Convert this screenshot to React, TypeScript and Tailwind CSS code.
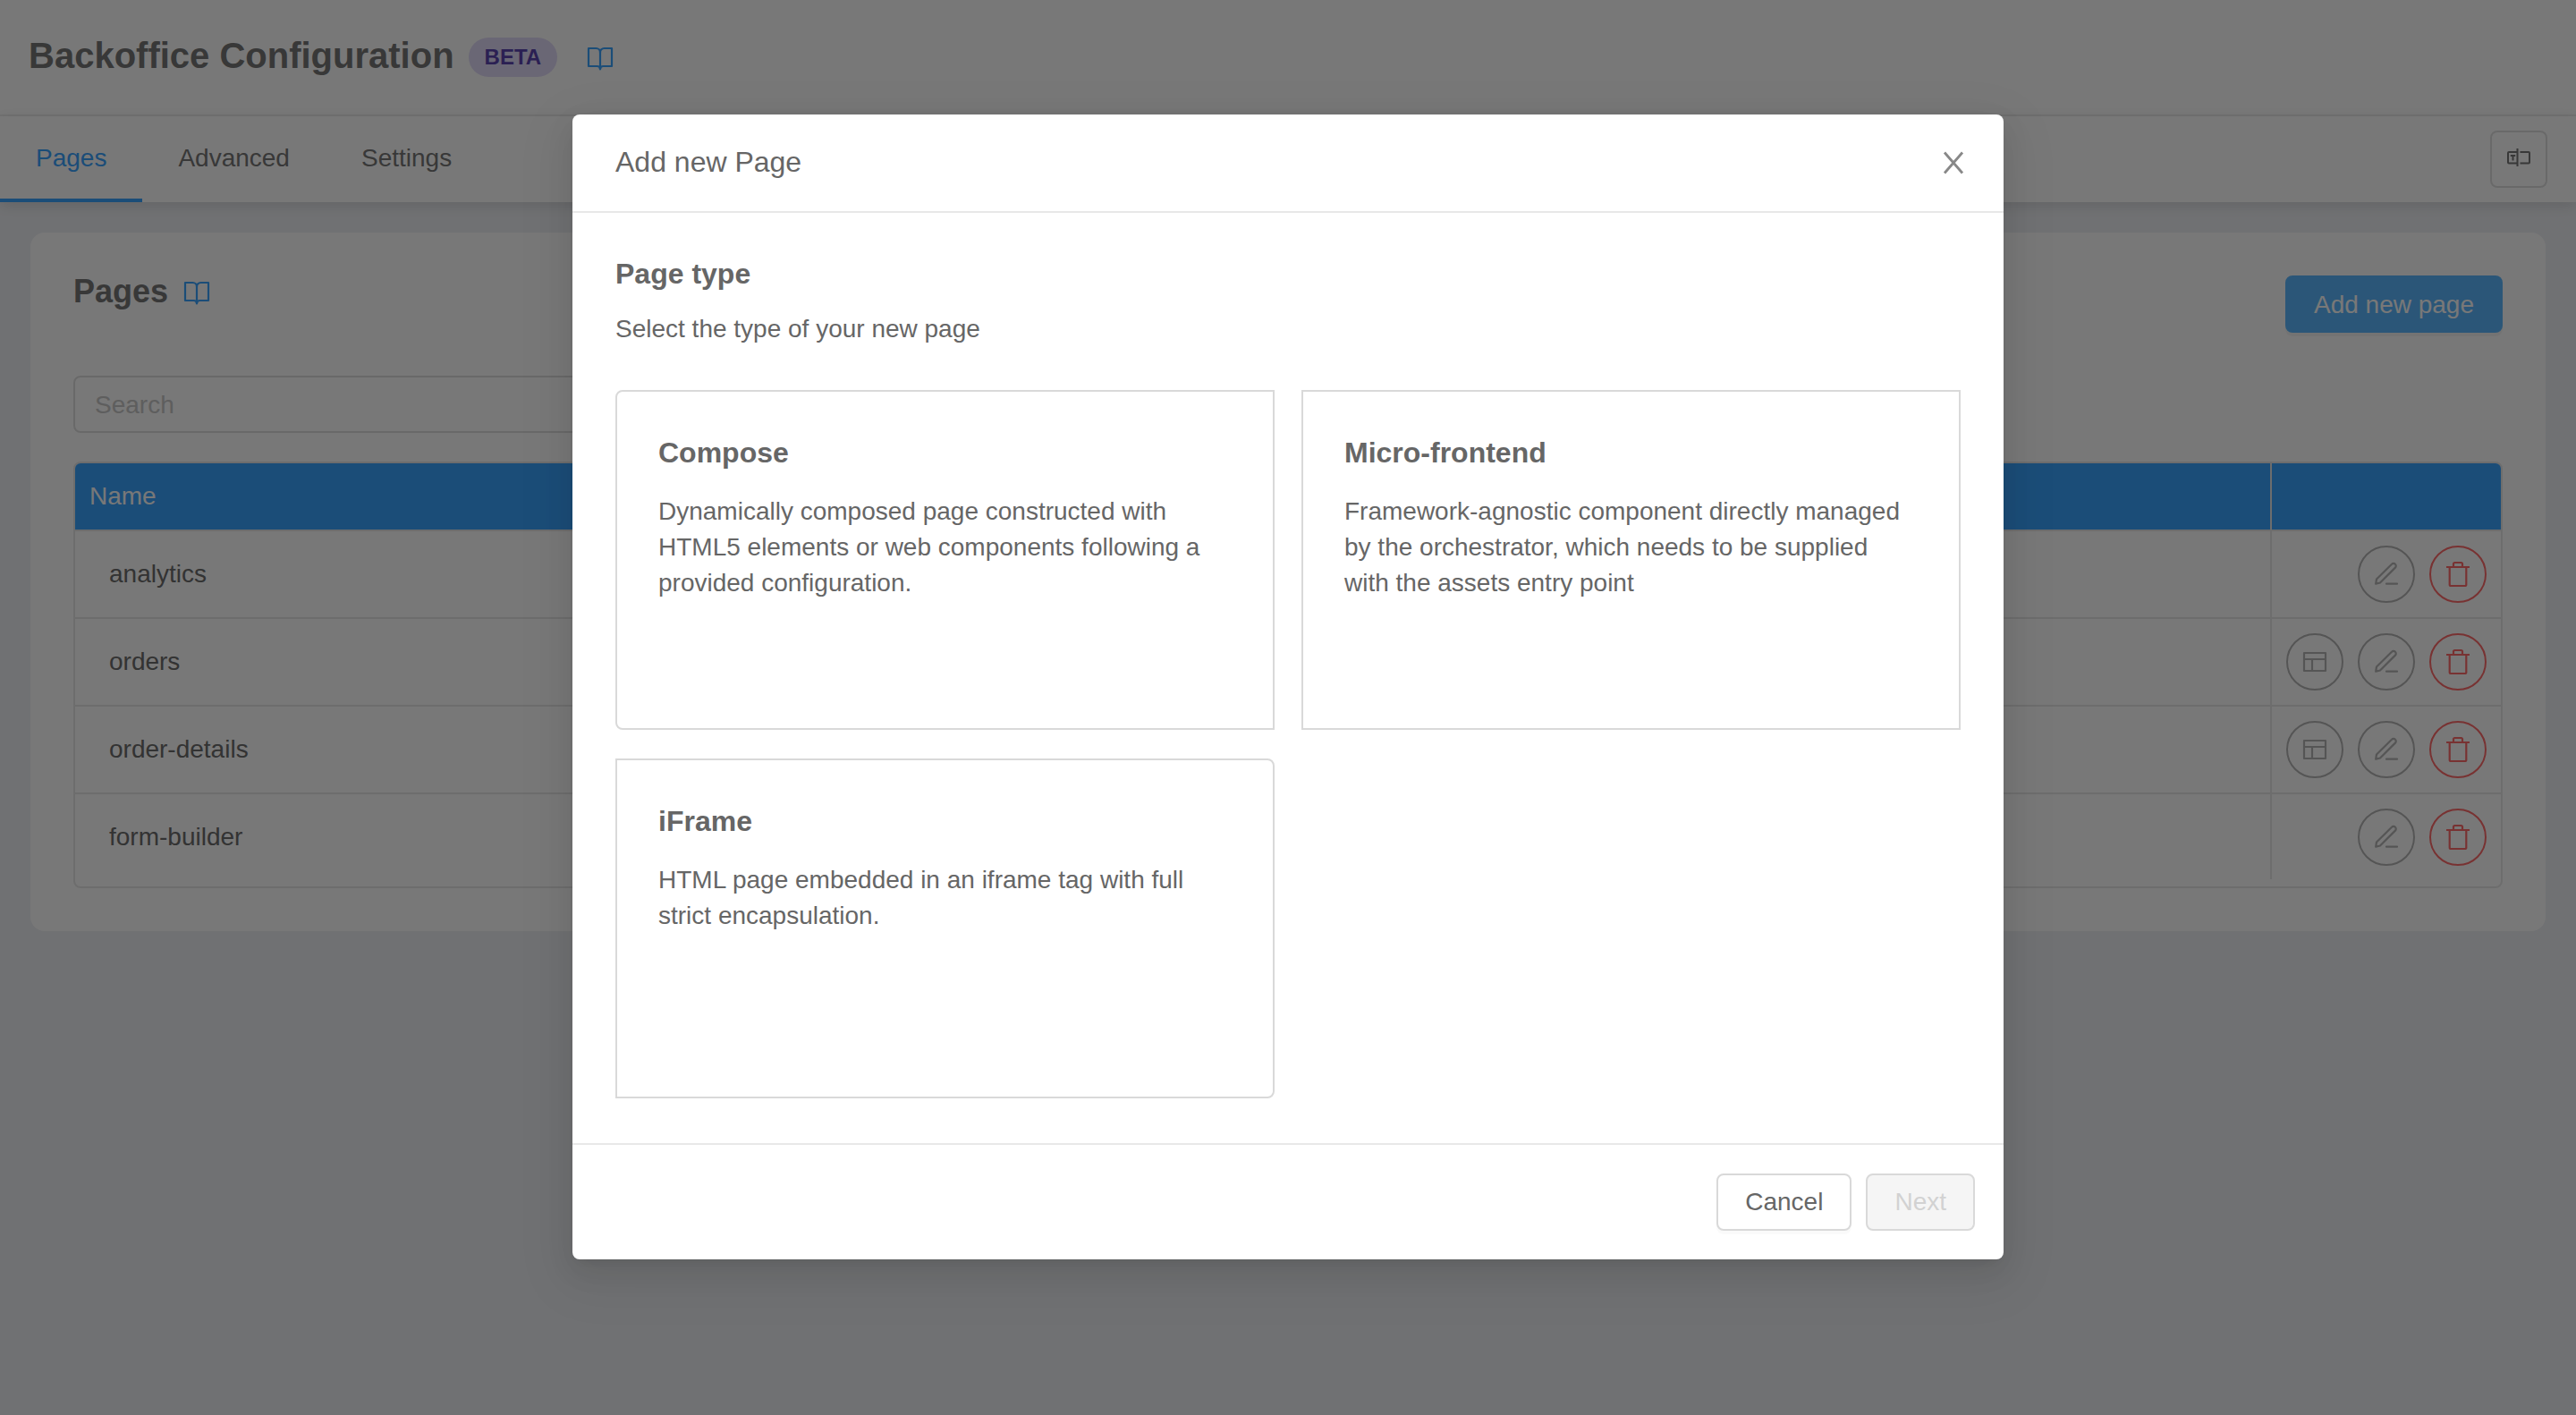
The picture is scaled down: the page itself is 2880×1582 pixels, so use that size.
import React from "react";

const HEADING = "font-bold text-[#777777]";

function BookIcon() {
  return (
    <svg viewBox="0 0 32 32" className="size-8" fill="none" stroke="#3ba3ff" strokeWidth="2.2" strokeLinejoin="round" aria-hidden="true">
      <path d="M3 6h8.500c2.500 0 4.500 2 4.500 4.500c0-2.500 2-4.500 4.500-4.500H29v20h-9.500c-2 0-3.500 1-3.500 3.500c0-2.500-1.500-3.500-3.500-3.500H3z" />
      <path d="M16 10v19" />
    </svg>
  );
}

function FieldIcon() {
  return (
    <svg viewBox="0 0 28 28" className="size-7" fill="none" stroke="#777777" strokeWidth="2" aria-hidden="true">
      <path d="M12.500 6H3a1 1 0 0 0-1 1v10.500a1 1 0 0 0 1 1h9.500M12.500 2v20M15.500 6H25a1 1 0 0 1 1 1v10.500a1 1 0 0 1-1 1h-9.500" />
      <path d="M4.800 10h5.400M7.500 10v5.500" />
    </svg>
  );
}

function LayoutIcon() {
  return (
    <svg viewBox="0 0 32 32" className="size-8" fill="none" stroke="#b5b5b5" strokeWidth="2.2" strokeLinejoin="round" aria-hidden="true">
      <path d="M4 6h24v20H4zM4 13h24M13 13v13" />
    </svg>
  );
}

function PenIcon() {
  return (
    <svg viewBox="0 0 32 32" className="size-8" fill="none" stroke="#b5b5b5" strokeWidth="2.2" strokeLinecap="round" strokeLinejoin="round" aria-hidden="true">
      <path d="M4.200 26.700l.8-5.200L22 4.700a2.700 2.700 0 0 1 3.900 0a2.700 2.700 0 0 1 0 3.900L9 25.500z" />
      <path d="M16 26.700h12" />
    </svg>
  );
}

function TrashIcon() {
  return (
    <svg viewBox="0 0 32 32" className="size-8" fill="none" stroke="#ff6b6b" strokeWidth="2.200" strokeLinejoin="round" aria-hidden="true">
      <path d="M3 8h26M6.700 8v19.500a1.500 1.500 0 0 0 1.500 1.500h15.600a1.500 1.500 0 0 0 1.500-1.500V8M11 8V4.500A1.500 1.500 0 0 1 12.500 3h7A1.500 1.500 0 0 1 21 4.500V8" />
    </svg>
  );
}

const tabs = ["Pages", "Advanced", "Settings"];

const rows = [
  { name: "analytics", layout: false },
  { name: "orders", layout: true },
  { name: "order-details", layout: true },
  { name: "form-builder", layout: false },
];

const pageTypes = [
  {
    title: "Compose",
    text: "Dynamically composed page constructed with HTML5 elements or web components following a provided configuration.",
    shape: "rounded-l-[8px]",
  },
  {
    title: "Micro-frontend",
    text: "Framework-agnostic component directly managed by the orchestrator, which needs to be supplied with the assets entry point",
    shape: "",
  },
  {
    title: "iFrame",
    text: "HTML page embedded in an iframe tag with full strict encapsulation.",
    shape: "rounded-r-[8px]",
  },
];

function RoundButton({ label, danger, children }: { label: string; danger?: boolean; children: React.ReactNode }) {
  return (
    <button
      type="button"
      aria-label={label}
      className={`flex size-16 items-center justify-center rounded-full border-2 bg-white ${danger ? "border-[#ff6b6b]" : "border-[#b5b5b5]"}`}
    >
      {children}
    </button>
  );
}

function Backdrop() {
  return (
    <div className="min-h-screen bg-[#eff1f5]">
      <header className="flex h-[130px] items-center border-b-2 border-[#f0f0f0] bg-white px-8">
        <h1 className={`pb-1 text-[40px] leading-[48px] ${HEADING}`}>Backoffice Configuration</h1>
        <span className="ml-4 flex h-11 items-center rounded-full bg-[#e2dcf8] px-[18px] text-[24px] font-bold text-[#5b45b0]">BETA</span>
        <a href="#docs" aria-label="Documentation" className="ml-8">
          <BookIcon />
        </a>
      </header>

      <nav className="flex h-24 items-center justify-between bg-white pr-8 shadow-[0_4px_16px_rgba(0,0,0,0.12)]">
        <div className="flex h-full">
          {tabs.map((tab, i) => (
            <button
              key={tab}
              type="button"
              className={`h-full border-b-4 px-10 pt-0.5 text-[28px] ${i === 0 ? "border-[#3ba3ff] text-[#3ba3ff]" : "border-transparent text-[#777777]"}`}
            >
              {tab}
            </button>
          ))}
        </div>
        <button type="button" aria-label="Edit fields" className="flex size-16 items-center justify-center rounded-[8px] border-2 border-[#e0e0e0] bg-white">
          <FieldIcon />
        </button>
      </nav>

      <main className="mx-[34px] mt-[34px] rounded-[16px] bg-white px-12 pt-12 pb-12">
        <div className="flex items-start justify-between">
          <div className="flex items-center gap-4">
            <h2 className={`text-[36px] leading-[36px] ${HEADING}`}>Pages</h2>
            <a href="#pages-docs" aria-label="Pages documentation">
              <BookIcon />
            </a>
          </div>
          <button type="button" className="h-16 rounded-[8px] bg-[#5cb8ff] px-8 pt-0.5 text-[28px] text-white shadow-[0_4px_0_rgba(0,0,0,0.04)]">
            Add new page
          </button>
        </div>

        <input
          type="search"
          aria-label="Search pages"
          placeholder="Search"
          className="mt-12 block h-16 w-[800px] rounded-[8px] border-2 border-[#e0e0e0] px-[22px] pt-0.5 text-[28px] placeholder:text-[#c8c8c8]"
        />

        <div className="mt-8 overflow-hidden rounded-[8px] border-2 border-[#e8e8e8] pb-2">
          <table className="w-full border-collapse text-left text-[28px]">
            <thead>
              <tr className="h-[75px] border-b-2 border-[#e8e8e8] bg-[#3ba3ff] text-white">
                <th className="px-4 font-normal">Name</th>
                <th className="w-[257px] border-l-2 border-[#e8e8e8]" aria-label="Actions" />
              </tr>
            </thead>
            <tbody>
              {rows.map((row) => (
                <tr key={row.name} className="h-[98px] border-b-2 border-[#e8e8e8] last:h-24 last:border-b-0">
                  <td className="px-[38px] text-[#6c6c6c]">{row.name}</td>
                  <td className="border-l-2 border-[#e8e8e8] px-4">
                    <div className="flex justify-end gap-4">
                      {row.layout && (
                        <RoundButton label={`Layout of ${row.name}`}>
                          <LayoutIcon />
                        </RoundButton>
                      )}
                      <RoundButton label={`Edit ${row.name}`}>
                        <PenIcon />
                      </RoundButton>
                      <RoundButton label={`Delete ${row.name}`} danger>
                        <TrashIcon />
                      </RoundButton>
                    </div>
                  </td>
                </tr>
              ))}
            </tbody>
          </table>
        </div>
      </main>
    </div>
  );
}

function AddPageDialog() {
  return (
    <section
      role="dialog"
      aria-modal="true"
      aria-labelledby="dialog-title"
      className="w-[1600px] max-w-full rounded-[8px] bg-white text-[#666666] shadow-[0_6px_12px_-8px_rgba(0,0,0,0.12),0_12px_32px_rgba(0,0,0,0.08),0_18px_56px_16px_rgba(0,0,0,0.05)]"
    >
      <header className="flex h-[110px] items-center justify-between border-b-2 border-[#e8e8e8] pr-10 pl-12">
        <h2 id="dialog-title" className="pb-0.5 text-[32px]">Add new Page</h2>
        <button type="button" aria-label="Close" className="flex size-8 items-center justify-center">
          <svg viewBox="0 0 32 32" className="size-8" fill="none" stroke="#888888" strokeWidth="2.8" aria-hidden="true">
            <path d="M6 4.500l20 23M26 4.500l-20 23" />
          </svg>
        </button>
      </header>

      <div className="px-12 pt-12 pb-[50px]">
        <h3 className="text-[32px] leading-[40px] font-bold">Page type</h3>
        <p className="mt-[22px] text-[28px] leading-[40px]">Select the type of your new page</p>
        <div className="mt-12 grid grid-cols-2 gap-x-[30px] gap-y-8">
          {pageTypes.map((type) => (
            <button
              key={type.title}
              type="button"
              className={`flex h-[380px] flex-col border-2 border-[#d9d9d9] px-[46px] py-[46px] text-left ${type.shape}`}
            >
              <span className="text-[32px] leading-[44px] font-bold">{type.title}</span>
              <span className="mt-6 text-[28px] leading-[40px]">{type.text}</span>
            </button>
          ))}
        </div>
      </div>

      <footer className="flex justify-end gap-4 border-t-2 border-[#e8e8e8] p-8">
        <button type="button" className="h-16 rounded-[8px] border-2 border-[#d9d9d9] bg-white px-[30px] text-[28px] shadow-[0_4px_0_rgba(0,0,0,0.02)]">
          Cancel
        </button>
        <button type="button" disabled className="h-16 rounded-[8px] border-2 border-[#d9d9d9] bg-[#f5f5f5] px-[30px] text-[28px] text-[#d2d2d2]">
          Next
        </button>
      </footer>
    </section>
  );
}

export default function App() {
  return (
    <div className="relative font-['Liberation_Sans',Arial,sans-serif]">
      <Backdrop />
      <div className="absolute inset-0 flex items-start justify-center bg-black/53 pt-32">
        <AddPageDialog />
      </div>
    </div>
  );
}
